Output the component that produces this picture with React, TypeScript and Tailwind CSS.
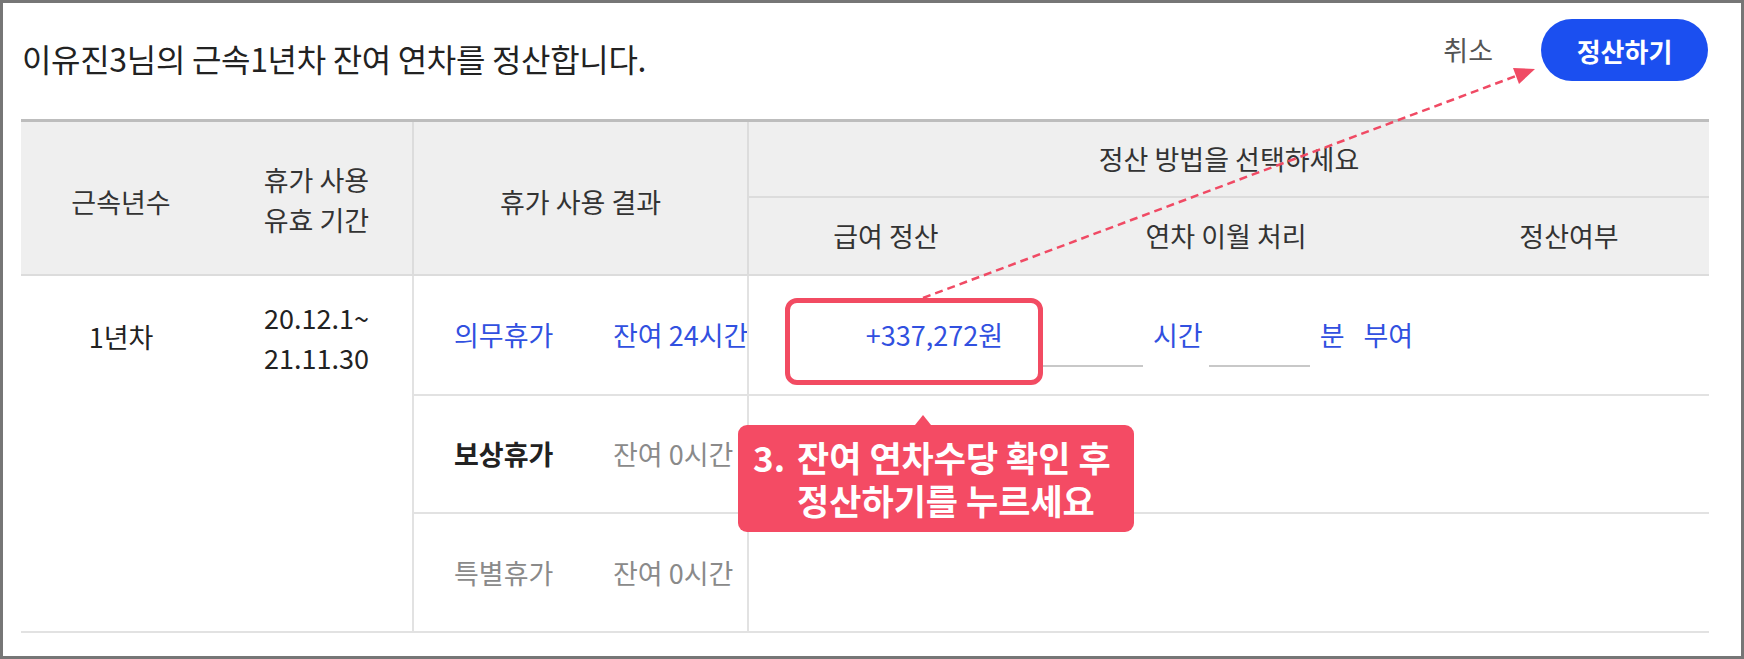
export default function App() {
  return (
    <div className="relative w-[1744px] h-[659px] overflow-hidden border-[3px] border-[#767676] bg-white text-[#222] font-['Noto_Sans_CJK_KR','Noto_Sans',sans-serif]">
      {/* 상단 */}
      <div className="flex h-[116px] items-start justify-between pl-[19px] pr-[33px]">
        <h1 className="mt-[35px] text-[32px] leading-[40px] font-normal tracking-[-0.01em]">
          이유진3님의 근속1년차 잔여 연차를 정산합니다.
        </h1>
        <div className="mt-[16px] flex h-[62px] items-center">
          <span className="text-[27px] text-[#555]">취소</span>
          <button className="ml-[48px] h-[62px] w-[167px] rounded-full bg-[#1b4ff0] text-[26px] font-bold text-white">
            정산하기
          </button>
        </div>
      </div>

      {/* 표 */}
      <div className="ml-[18px] w-[1688px]">
        <div className="grid grid-cols-[200px_191px_335px_276px_406px_280px] grid-rows-[76px_76px] border-t-[3px] border-b-2 border-[#bdbdbd] border-b-[#dcdcdc] bg-[#efefef] text-[27px] leading-[40px] text-[#333]">
          <div className="row-span-2 flex items-center justify-center pt-[8px]">근속년수</div>
          <div className="row-span-2 flex flex-col items-center justify-center pt-[4px] text-center">
            <span>휴가 사용</span>
            <span>유효 기간</span>
          </div>
          <div className="row-span-2 flex items-center justify-center border-l-2 border-[#dcdcdc] pt-[8px]">
            휴가 사용 결과
          </div>
          <div className="col-span-3 flex items-center justify-center border-l-2 border-b-2 border-[#dcdcdc]">
            정산 방법을 선택하세요
          </div>
          <div className="flex items-center justify-center border-l-2 border-[#dcdcdc]">급여 정산</div>
          <div className="flex items-center justify-center">연차 이월 처리</div>
          <div className="flex items-center justify-center">정산여부</div>
        </div>

        <div className="grid grid-cols-[200px_191px_335px_1fr] grid-rows-[120px_118px_117px] border-b-2 border-[#e2e2e2] text-[27px] leading-[40px]">
          <div className="row-span-3 flex flex-col items-center pt-[41px]">1년차</div>
          <div className="row-span-3 flex flex-col items-center pt-[22px]">
            <span>20.12.1~</span>
            <span>21.11.30</span>
          </div>

          <div className="flex items-center overflow-hidden border-l-2 border-b-2 border-[#e2e2e2] pl-[40px] text-[#3150e0]">
            <span className="w-[159px] shrink-0">의무휴가</span>
            <span className="whitespace-nowrap">잔여 24시간</span>
          </div>
          <div className="flex items-center border-l-2 border-b-2 border-[#e2e2e2] text-[#3150e0]">
            <span className="w-[254px] text-right">+337,272원</span>
            <span className="ml-[39px] h-[64px] w-[101px] border-b-2 border-[#c8c8c8]" />
            <span className="ml-[10px]">시간</span>
            <span className="ml-[6px] h-[64px] w-[101px] border-b-2 border-[#c8c8c8]" />
            <span className="ml-[10px]">분</span>
            <span className="ml-[19px]">부여</span>
          </div>

          <div className="flex items-center border-l-2 border-b-2 border-[#e2e2e2] pl-[40px]">
            <span className="w-[159px] font-bold text-[#222]">보상휴가</span>
            <span className="text-[#8a8a8a]">잔여 0시간</span>
          </div>
          <div className="border-l-2 border-b-2 border-[#e2e2e2]" />

          <div className="flex items-center border-l-2 border-[#e2e2e2] pl-[40px] text-[#8a8a8a]">
            <span className="w-[159px]">특별휴가</span>
            <span>잔여 0시간</span>
          </div>
          <div className="border-l-2 border-[#e2e2e2]" />
        </div>
      </div>

      {/* 안내 표시 */}
      <div className="absolute left-[782px] top-[295px] h-[87px] w-[258px] rounded-[12px] border-[5px] border-[#f24b62]" />

      <svg className="pointer-events-none absolute -left-[3px] -top-[3px]" width="1744" height="659">
        <line x1="923" y1="298" x2="1516" y2="76" stroke="#f04a64" strokeWidth="2.5" strokeDasharray="8 5" />
        <polygon points="1535,69 1519,84 1513,68" fill="#f04a64" />
      </svg>

      <div className="absolute left-[735px] top-[422px] h-[107px] w-[396px] rounded-[9px] bg-[#f44b64] text-white">
        <span className="absolute -top-[10px] left-[177px] h-0 w-0 border-x-[8px] border-b-[10px] border-x-transparent border-b-[#f44b64]" />
        <div className="flex pl-[15px] pt-[10px] text-[35px] font-semibold leading-[43px]">
          <span>3.</span>
          <span className="ml-[12px]">
            잔여 연차수당 확인 후
            <br />
            정산하기를 누르세요
          </span>
        </div>
      </div>
    </div>
  );
}
